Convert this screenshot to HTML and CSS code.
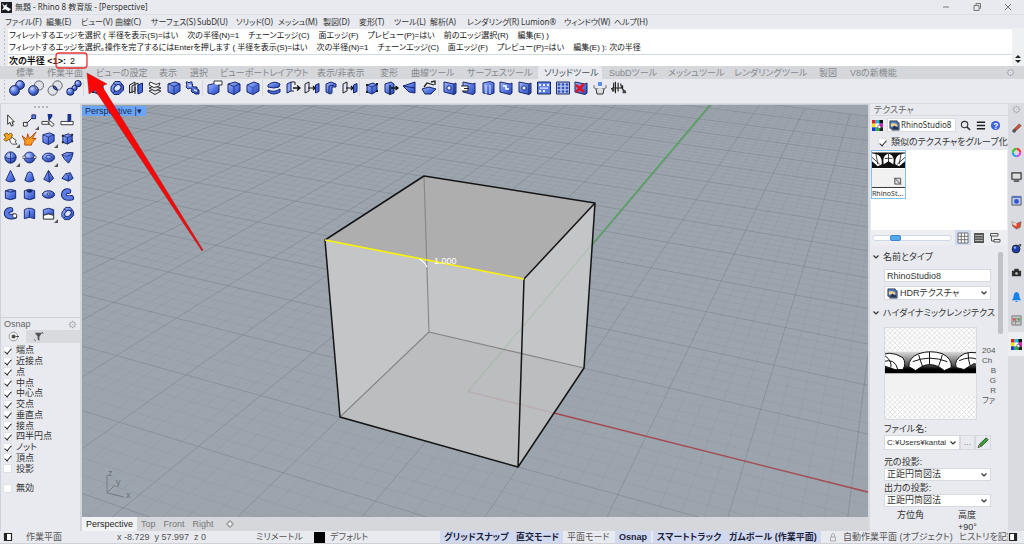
FILE: index.html
```html
<!DOCTYPE html>
<html lang="ja">
<head>
<meta charset="utf-8">
<title>無題 - Rhino 8 教育版 - [Perspective]</title>
<link rel="stylesheet" href="styles.css">
</head>
<body>
<svg class="sprite" aria-hidden="true">
  <defs>
    <linearGradient id="gb" x1="0" y1="0" x2="1" y2="1"><stop offset="0" stop-color="#a9bdfb"/><stop offset=".5" stop-color="#5a7be6"/><stop offset="1" stop-color="#2747b4"/></linearGradient>
    <radialGradient id="gs" cx=".35" cy=".3" r=".75"><stop offset="0" stop-color="#c9d6ff"/><stop offset=".5" stop-color="#5a7be6"/><stop offset="1" stop-color="#1d3799"/></radialGradient>
    <linearGradient id="band" x1="0" y1="0" x2="0" y2="1"><stop offset="0" stop-color="#ddd"/><stop offset=".6" stop-color="#555"/><stop offset=".8" stop-color="#000"/></linearGradient>
    <pattern id="checks" width="5" height="5" patternUnits="userSpaceOnUse"><path d="M0 0L5 5M5 0L0 5" stroke="#d3d3d3" stroke-width=".7"/></pattern>
  </defs>
  <symbol id="union" viewBox="0 0 16 16"><g fill="url(#gs)" stroke="#18255f"><circle cx="11" cy="5" r="4.4"/><circle cx="5.5" cy="10.5" r="4.9"/></g></symbol>
  <symbol id="diff" viewBox="0 0 16 16"><circle cx="11" cy="5.5" r="4.6" fill="#dfe2e8" stroke="#666"/><circle cx="5.5" cy="10.5" r="4.9" fill="url(#gs)" stroke="#18255f"/><path d="M6.5 5.6A4.6 4.6 0 0 0 10.4 10" fill="#ccd" stroke="#555"/></symbol>
  <symbol id="inter" viewBox="0 0 16 16"><g fill="#dfe2e8" stroke="#666"><circle cx="10.5" cy="5.5" r="4.7"/><circle cx="5.7" cy="10.5" r="4.7"/></g><path d="M6 6A4.8 4.8 0 0 1 10.2 10.2A4.8 4.8 0 0 1 6 6" fill="#456ae0" stroke="#18255f"/></symbol>
  <symbol id="split" viewBox="0 0 16 16"><g fill="url(#gs)" stroke="#18255f"><circle cx="12" cy="3.7" r="3.2"/><circle cx="8.5" cy="8" r="2.6"/><circle cx="4.3" cy="11.7" r="3.6"/></g></symbol>
  <symbol id="box" viewBox="0 0 16 16"><path d="M2 4L9 2L14 4V11L8 14.5L2 12Z" fill="url(#gb)" stroke="#17276c"/><path d="M2 4L8 6.500L14 4M8 6.500V14.500" fill="none" stroke="#17276c" stroke-width=".8"/></symbol>
  <symbol id="boxpt" viewBox="0 0 16 16"><path d="M3 5L9 3L13 5V11L8 14L3 12Z" fill="url(#gb)" stroke="#17276c"/><path d="M3 5L8 7L13 5M8 7V14" fill="none" stroke="#17276c" stroke-width=".8"/><g fill="#222"><path d="M2 4h2v2h-2zM12 3h2v2h-2zM2 11h2v2h-2zM12 10h2v2h-2z"/></g></symbol>
  <symbol id="boxnote" viewBox="0 0 16 16"><path d="M1 5L8 3.500L12 5V12L7 14.500L1 13Z" fill="url(#gb)" stroke="#17276c"/><path d="M7 4V1H15V5H11" fill="#fff" stroke="#333"/></symbol>
  <symbol id="chamfer" viewBox="0 0 16 16"><path d="M2 5L9 2L14 4V11L8 14.500L2 12Z" fill="url(#gb)" stroke="#17276c"/><path d="M2 5L8 8L14 4M8 8V14" fill="none" stroke="#2c49b0" stroke-width=".8"/></symbol>
  <symbol id="nut" viewBox="0 0 16 16"><path d="M2 7L6 1.500H11L14.500 6V10L10 14.500H5L2 11Z" fill="url(#gb)" stroke="#17276c"/><ellipse cx="8.500" cy="8" rx="3.800" ry="2.800" transform="rotate(-40 8.500 8)" fill="#dbe3ff" stroke="#17276c"/><path d="M4 3L7 5M13 4L11 6M4 13L6 11" stroke="#17276c"/></symbol>
  <symbol id="shell" viewBox="0 0 16 16"><path d="M1.500 13V5L7 2V11Z" fill="#d5dbe8" stroke="#222"/><path d="M4 13V6L10 3V12M7 14V7" fill="none" stroke="#222"/><path d="M10 14V5L14.500 3V12Z" fill="#456ae0" stroke="#17276c"/></symbol>
  <symbol id="layers" viewBox="0 0 16 16"><g fill="#e4e7ee" stroke="#333"><path d="M2 11L7 9L14 11L8 14.500Z"/><path d="M2 8L7 6L14 8L8 11Z"/><path d="M3 2L9 4.500L13 3L12 6L7 7.500L2 5Z" fill="#fff"/></g></symbol>
  <symbol id="puzzle" viewBox="0 0 16 16"><path d="M1 2H3L4 3L5 2H7V4L8 5L7 6L9 7H12V9L14 10V14H10L9 12L8 13L6 11L7 9L5 8L3 9L1 7L2 5Z" fill="url(#gb)" stroke="#17276c"/><path d="M4 5L6 6M9 10L12 11" stroke="#dde5ff" stroke-width="1.500"/></symbol>
  <symbol id="loft" viewBox="0 0 16 16"><path d="M2 5Q8 0 14 4L13 7Q8 9 2 7Z" fill="url(#gb)" stroke="#17276c"/><path d="M2 10Q8 13 14 9V12Q8 16 2 12Z" fill="#456ae0" stroke="#17276c"/></symbol>
  <symbol id="pull" viewBox="0 0 16 16"><path d="M2 13V4L6 2V11Z" fill="#8ca5f5" stroke="#17276c"/><path d="M6 2H10V5M6 11H9" fill="none" stroke="#222"/><path d="M8 8H14M12 5.500L15 8L12 10.500" fill="none" stroke="#111" stroke-width="1.400"/></symbol>
  <symbol id="pull2" viewBox="0 0 16 16"><path d="M1 13V4L5 2V11Z" fill="#dfe5f8" stroke="#222"/><path d="M4 8H11M9 6L11 8L9 10" fill="none" stroke="#111" stroke-width="1.200"/><path d="M11.500 13V5L15 3.500V11.500Z" fill="#456ae0" stroke="#17276c"/></symbol>
  <symbol id="ell" viewBox="0 0 16 16"><path d="M3 4L8 2L13 4V7H9V13L7 14L3 12Z" fill="url(#gb)" stroke="#17276c"/><path d="M6 6V13M6 6L11 5" stroke="#17276c"/></symbol>
  <symbol id="mvface" viewBox="0 0 16 16"><path d="M2 4L8 2L11 4V13L7 14.500L2 12Z" fill="url(#gb)" stroke="#17276c"/><path d="M7 5V14M8 8H15M12.500 6L15 8L12.500 10" fill="none" stroke="#111" stroke-width="1.300"/></symbol>
  <symbol id="wedge" viewBox="0 0 16 16"><path d="M1 6L13 2V13L7 12Z" fill="url(#gb)" stroke="#17276c"/><path d="M1 6L13 8" stroke="#17276c"/></symbol>
  <symbol id="rotface" viewBox="0 0 16 16"><path d="M1 9L8 7L15 9L10 14H4Z" fill="url(#gb)" stroke="#17276c"/><path d="M3 7L6 3L13 5M10 2L14 1V5" fill="none" stroke="#222" stroke-width="1.300"/></symbol>
  <symbol id="slab" viewBox="0 0 16 16"><path d="M2 2L12 4L14 3V13L12 14.500L2 12Z" fill="url(#gb)" stroke="#17276c"/><path d="M12 4V14" stroke="#17276c"/><circle cx="7" cy="8" r="2.200" fill="#e6ecff" stroke="#17276c"/></symbol>
  <symbol id="slab2" viewBox="0 0 16 16"><path d="M2 2L12 4L14 3V13L12 14.500L2 12Z" fill="url(#gb)" stroke="#17276c"/><path d="M0 6H7V11H1" fill="#fff" stroke="#222"/><path d="M3 8.500H8" stroke="#222"/></symbol>
  <symbol id="slab3" viewBox="0 0 16 16"><path d="M3 3L10 1.500L14 3V13L10 14.500L3 13Z" fill="url(#gb)" stroke="#17276c"/><path d="M6 5V14M10 5V14" stroke="#e6ecff"/></symbol>
  <symbol id="slab4" viewBox="0 0 16 16"><path d="M2 2L12 4L14 3V13L12 14.500L2 12Z" fill="url(#gb)" stroke="#17276c"/><path d="M5 6H8V9H11" fill="none" stroke="#fff" stroke-width="1.600"/></symbol>
  <symbol id="arr" viewBox="0 0 16 16"><path d="M1.500 2H14.500V14H1.500Z" fill="#5b7ce5" stroke="#17276c"/><g fill="#eef2ff"><circle cx="4" cy="5" r="1.200"/><circle cx="8" cy="5" r="1.200"/><circle cx="12" cy="5" r="1.200"/><circle cx="4" cy="11" r="1.200"/><circle cx="8" cy="11" r="1.200"/><path d="M4 7.500h8v1.200h-8z"/></g></symbol>
  <symbol id="arr2" viewBox="0 0 16 16"><path d="M1.500 2H14.500V14H1.500Z" fill="#aebbe8" stroke="#222f66"/><g fill="#3454bd"><circle cx="4" cy="4.500" r="1.300"/><circle cx="8" cy="4.500" r="1.300"/><circle cx="12" cy="4.500" r="1.300"/><circle cx="4" cy="8" r="1.300"/><circle cx="8" cy="8" r="1.300"/><circle cx="12" cy="8" r="1.300"/><circle cx="4" cy="11.500" r="1.300"/><circle cx="8" cy="11.500" r="1.300"/><circle cx="12" cy="11.500" r="1.300"/></g></symbol>
  <symbol id="del" viewBox="0 0 16 16"><path d="M2 2L12 4L14 3V13L12 14.500L2 12Z" fill="url(#gb)" stroke="#17276c"/><path d="M3 5L11 12M11 4L3 12" stroke="#e3131d" stroke-width="2.500"/></symbol>
  <symbol id="bucket" viewBox="0 0 16 16"><path d="M6 2h4v4h-4z" fill="#5b8cf0"/><path d="M2 5V8Q8 11 14 8V5" fill="none" stroke="#777"/><path d="M4 9L5 14H11L12 9" fill="#ddd" stroke="#333"/></symbol>
  <symbol id="fil" viewBox="0 0 18 16"><path d="M3 2V6Q3 9 0 9M5 1V14M8 2V12M3 8H12M11 3Q11 9 16 12M13 5V9" fill="none" stroke="#222" stroke-width="1.300"/><path d="M1 9h3v3h-3zM13 11h4v3h-4z" fill="#444"/></symbol>
  <symbol id="cursor" viewBox="0 0 16 16"><path d="M5 2V12L7.500 10L9 14L11 13L9.500 9.500H12Z" fill="#fff" stroke="#222"/></symbol>
  <symbol id="line" viewBox="0 0 16 16"><path d="M4 12L11 5" stroke="#222"/><path d="M1.500 10h4v4h-4z" fill="#fff" stroke="#222"/><path d="M10.500 2h4v4h-4z" fill="#5b7ce5" stroke="#17276c"/></symbol>
  <symbol id="trim" viewBox="0 0 16 16"><path d="M1 9H7L9 12H1ZM9 8L14 12L12 14.500L8 11Z" fill="#fff" stroke="#333"/><path d="M7 1H12V4L8 9Z" fill="#18358f"/></symbol>
  <symbol id="cut" viewBox="0 0 16 16"><path d="M1 9H14V12.500H1Z" fill="#fff" stroke="#333"/><path d="M8 1H12V8L8 10Z" fill="#18358f"/></symbol>
  <symbol id="jig" viewBox="0 0 16 16"><path d="M1 4L4 2L6 4L8 2L10 4L9 7L11 9L8 10L6 9L3 11L1 9L3 7Z" fill="#f4a51d" stroke="#7a4a00"/><path d="M7 9L10 7L14 10L13 12L15 14H10L8 12Z" fill="#fff" stroke="#444"/></symbol>
  <symbol id="boom" viewBox="0 0 16 16"><path d="M3 15L3 11L0 5L5 9L6 3L8 8L15 1L11 8L15 8L11 12L10 15Z" fill="#ff9d1e" stroke="#b8440a"/></symbol>
  <symbol id="ball" viewBox="0 0 16 16"><circle cx="8" cy="8" r="6" fill="url(#gs)" stroke="#17276c"/><path d="M2 8Q8 11 14 8M8 2V14" fill="none" stroke="#17276c" stroke-width=".8"/></symbol>
  <symbol id="ballpt" viewBox="0 0 16 16"><circle cx="8" cy="8" r="5.800" fill="url(#gs)" stroke="#17276c"/><path d="M2 8Q8 11 14 8" fill="none" stroke="#17276c" stroke-width=".8"/><path d="M1 6.500h2.500v2.500h-2.500zM12.500 6.500h2.500v2.500h-2.500z" fill="#fff" stroke="#222" stroke-width=".6"/></symbol>
  <symbol id="oval" viewBox="0 0 16 16"><ellipse cx="8" cy="8" rx="6.500" ry="4.700" fill="url(#gs)" stroke="#17276c"/><ellipse cx="8" cy="7.500" rx="3" ry="1.800" fill="#8fa8fa" stroke="#17276c" stroke-width=".8"/></symbol>
  <symbol id="parab" viewBox="0 0 16 16"><path d="M2 5Q7 1 14 3Q13 10 9 14Q4 10 2 5Z" fill="url(#gb)" stroke="#17276c"/><path d="M2 5Q8 9 14 3" fill="none" stroke="#17276c" stroke-width=".8"/></symbol>
  <symbol id="cone" viewBox="0 0 16 16"><path d="M8 1.500L13 12Q8 15.500 3 12Z" fill="url(#gb)" stroke="#17276c"/></symbol>
  <symbol id="tcone" viewBox="0 0 16 16"><path d="M6 4Q8 2 10.500 4L13 12Q8 15.500 3 12Z" fill="url(#gb)" stroke="#17276c"/></symbol>
  <symbol id="pyr" viewBox="0 0 16 16"><path d="M8 1.500L13.500 10L9 14L3 11Z" fill="url(#gb)" stroke="#17276c"/><path d="M8 2L9 14" stroke="#17276c"/></symbol>
  <symbol id="tpyr" viewBox="0 0 16 16"><path d="M6 5L11 4L14 10L9 13L2 10Z" fill="url(#gb)" stroke="#17276c"/><path d="M6 5L9 8L11 4M9 8V13" fill="none" stroke="#17276c" stroke-width=".7"/></symbol>
  <symbol id="cyl" viewBox="0 0 16 16"><path d="M2.500 4Q8 1 13.500 4V12Q8 15 2.500 12Z" fill="url(#gb)" stroke="#17276c"/><path d="M2.500 4Q8 7 13.500 4" fill="none" stroke="#17276c"/></symbol>
  <symbol id="tube" viewBox="0 0 16 16"><path d="M2.500 4Q8 1 13.500 4V12Q8 15 2.500 12Z" fill="url(#gb)" stroke="#17276c"/><ellipse cx="8" cy="4.500" rx="3" ry="1.500" fill="#17276c"/></symbol>
  <symbol id="torus" viewBox="0 0 16 16"><ellipse cx="8" cy="8" rx="6.500" ry="4" fill="url(#gs)" stroke="#17276c"/><ellipse cx="8" cy="7.500" rx="2" ry="1" fill="#fff" stroke="#17276c"/></symbol>
  <symbol id="pipe" viewBox="0 0 16 16"><g fill="none" stroke-linecap="round"><path d="M9 4.500Q4 4 4 8.500Q5 12.500 12 11.500" stroke="#17276c" stroke-width="6"/><path d="M9 4.500Q4 4 4 8.500Q5 12.500 12 11.500" stroke="#5b7ce5" stroke-width="4"/></g></symbol>
  <symbol id="pipe2" viewBox="0 0 16 16"><g fill="none" stroke-linecap="round"><path d="M8 4Q3 4.500 4 9Q6 12.500 12 11" stroke="#17276c" stroke-width="6"/><path d="M8 4Q3 4.500 4 9Q6 12.500 12 11" stroke="#5b7ce5" stroke-width="4"/></g><circle cx="12.500" cy="10.500" r="2.300" fill="#fff" stroke="#333"/></symbol>
  <symbol id="extr" viewBox="0 0 16 16"><path d="M2.500 4L6 2.500H10L13.500 4V13.500L8 12L2.500 13.500Z" fill="url(#gb)" stroke="#17276c"/><path d="M8 5V12" stroke="#17276c"/></symbol>
  <symbol id="extr2" viewBox="0 0 16 16"><path d="M2.500 4Q8 1 13.500 4V10Q8 7 2.500 10Z" fill="url(#gb)" stroke="#17276c"/><path d="M2.500 10Q8 7 13.500 10V14H2.500Z" fill="#fff" stroke="#222"/></symbol>
  <symbol id="gear" viewBox="0 0 12 12"><path d="M6 1V11M1 6H11M2.500 2.500L9.500 9.500M9.500 2.500L2.500 9.500" stroke="#aaadb5" stroke-width="1.800"/><circle cx="6" cy="6" r="3.300" fill="#e8eaef" stroke="#aaadb5"/><circle cx="6" cy="6" r="1" fill="#b9bcc3"/></symbol>
  <symbol id="mat" viewBox="0 0 12 12"><path d="M0 0H4V4H0Z" fill="#e02020"/><path d="M4 0H8V4H4Z" fill="#18c0e0"/><path d="M8 0H12V4H8Z" fill="#111"/><path d="M0 4H4V8H0Z" fill="#f3e216"/><path d="M4 4H8V8H4Z" fill="#fff"/><path d="M8 4H12V8H8Z" fill="#d21fc8"/><path d="M0 8H4V12H0Z" fill="#1c36d8"/><path d="M4 8H8V12H4Z" fill="#20b840"/><path d="M8 8H12V12H8Z" fill="#222"/><circle cx="8" cy="7.500" r="1.800" fill="#fff" stroke="#222" stroke-width=".6"/></symbol>
  <symbol id="pic" viewBox="0 0 12 12"><path d="M1 1H9V3H11V11H3V9H1Z" fill="#4d7fc7" stroke="#37404f"/><path d="M2 4Q5 2 9 5V7H2Z" fill="#f0cf8f"/><path d="M4 8L6 6L8 8L9 7L10 9V10H4Z" fill="#24324d"/></symbol>
  <symbol id="chev" viewBox="0 0 8 8"><path d="M1.500 2.500L4 5L6.500 2.500" fill="none" stroke="#333" stroke-width="1.200"/></symbol>
  <symbol id="hdr" viewBox="0 0 92 92"><path d="M0 0H92V92H0Z" fill="#fff"/><path d="M0 0H92V92H0Z" fill="url(#checks)"/><path d="M0 24H92V46H0Z" fill="url(#band)"/><path d="M0 46H92V69H0Z" fill="#f2f2f2"/><g fill="#fff" stroke="#111" stroke-width="1"><path d="M-8 30Q4 21 18 30Q22 36 18 42L10 42L-2 38Z"/><path d="M24 39Q24 30 34 26Q46 22 58 26Q68 31 67 40L60 43L54 39Q45 35 37 39L31 43Z"/><path d="M72 40Q69 32 80 26Q92 22 104 30V40L90 36L80 42Z"/></g><path d="M-2 34Q10 30 13 42M0 28Q7 33 6 40M45 24V37M28 34Q45 27 63 34M34 27Q36 34 38 39M58 27Q56 34 54 39M75 33Q86 28 94 32M84 25Q84 32 86 38" fill="none" stroke="#111" stroke-width="1"/></symbol>
</svg>

<header class="titlebar">
  <svg class="logo" viewBox="0 0 12 12"><rect width="12" height="12" fill="#1b1d22"/><path d="M1 1L4 4L7 2L6 5L11 8L8 10L5 8L1 9L3 6Z" fill="#fff"/></svg>
  <h1>無題 - Rhino 8 教育版 - [Perspective]</h1>
  <div class="winbtns">
    <button aria-label="最小化"><svg viewBox="0 0 10 10"><path d="M2 5H8" stroke="#777"/></svg></button>
    <button aria-label="元に戻す"><svg viewBox="0 0 10 10"><path d="M2 3.500H7V8.500H2ZM4 3V1.500H8.500V6.500H7.500" fill="none" stroke="#777"/></svg></button>
    <button aria-label="閉じる"><svg viewBox="0 0 10 10"><path d="M2 2L8 8M8 2L2 8" stroke="#777"/></svg></button>
  </div>
</header>

<nav class="menubar">
  <button>ファイル(F)</button><button>編集(E)</button><button>ビュー(V)</button><button>曲線(C)</button><button>サーフェス(S)</button><button>SubD(U)</button><button>ソリッド(O)</button><button>メッシュ(M)</button><button>製図(D)</button><button>変形(T)</button><button>ツール(L)</button><button>解析(A)</button><button>レンダリング(R)</button><button>Lumion®</button><button>ウィンドウ(W)</button><button>ヘルプ(H)</button>
</nav>

<section class="command">
  <div class="grip"></div>
  <div class="console">
    <div class="history">
      <p><span>フィレットするエッジを選択 ( 半径を表示(S)=はい</span><span>次の半径(N)=1</span><span>チェーンエッジ(C)</span><span>面エッジ(F)</span><span>プレビュー(P)=はい</span><span>前のエッジ選択(R)</span><span>編集(E) )</span></p>
      <p><span>フィレットするエッジを選択。操作を完了するにはEnterを押します ( 半径を表示(S)=はい</span><span>次の半径(N)=1</span><span>チェーンエッジ(C)</span><span>面エッジ(F)</span><span>プレビュー(P)=はい</span><span>編集(E) ): 次の半径</span></p>
    </div>
    <div class="prompt"><label for="cmd">次の半径 &lt;1&gt;:</label><input id="cmd" value="2"></div>
  </div>
  <div class="spin"><svg viewBox="0 0 8 10"><path d="M1 4L4 1L7 4ZM1 6L4 9L7 6Z" fill="#222"/></svg></div>
</section>

<nav class="tabs">
  <button>標準</button><button>作業平面</button><button>ビューの設定</button><button>表示</button><button>選択</button><button>ビューポートレイアウト</button><button>表示/非表示</button><button>変形</button><button>曲線ツール</button><button>サーフェスツール</button><button class="on">ソリッドツール</button><button>SubDツール</button><button>メッシュツール</button><button>レンダリングツール</button><button>製図</button><button>V8の新機能</button>
  <svg class="gear"><use href="#gear"/></svg>
</nav>

<div class="toolbar">
  <div class="grip"></div>
  <div class="tools g4"><button aria-label="和"><svg><use href="#union"/></svg></button><button aria-label="差"><svg><use href="#diff"/></svg></button><button aria-label="積"><svg><use href="#inter"/></svg></button><button aria-label="分割"><svg><use href="#split"/></svg></button></div>
  <div class="tools g6"><button aria-label="エッジ"><svg><use href="#boxpt"/></svg></button><button aria-label="ナット"><svg><use href="#nut"/></svg></button><button aria-label="シェル"><svg><use href="#shell"/></svg></button><button aria-label="抽出"><svg><use href="#layers"/></svg></button><button aria-label="キャップ"><svg><use href="#box"/></svg></button><button aria-label="マージ"><svg><use href="#puzzle"/></svg></button></div>
  <div class="tools g3"><button aria-label="注記"><svg><use href="#boxnote"/></svg></button><button aria-label="フィレット"><svg><use href="#box"/></svg></button><button aria-label="面取り"><svg><use href="#chamfer"/></svg></button></div>
  <div class="tools g5"><button aria-label="ブレンド"><svg><use href="#loft"/></svg></button><button aria-label="押し出し"><svg><use href="#pull"/></svg></button><button aria-label="境界"><svg><use href="#pull2"/></svg></button><button aria-label="折り"><svg><use href="#ell"/></svg></button><button aria-label="移動"><svg><use href="#pull2"/></svg></button></div>
  <div class="tools g4b"><button aria-label="制御点"><svg><use href="#boxpt"/></svg></button><button aria-label="面移動"><svg><use href="#mvface"/></svg></button><button aria-label="テーパ"><svg><use href="#wedge"/></svg></button><button aria-label="面回転"><svg><use href="#rotface"/></svg></button></div>
  <div class="tools g10"><button aria-label="丸穴"><svg><use href="#slab"/></svg></button><button aria-label="穴配置"><svg><use href="#slab2"/></svg></button><button aria-label="回転穴"><svg><use href="#slab3"/></svg></button><button aria-label="穴移動"><svg><use href="#slab4"/></svg></button><button aria-label="穴複製"><svg><use href="#slab"/></svg></button><button aria-label="環状穴"><svg><use href="#arr"/></svg></button><button aria-label="穴配列"><svg><use href="#arr2"/></svg></button><button aria-label="穴削除"><svg><use href="#del"/></svg></button><button aria-label="ゴミ箱"><svg><use href="#bucket"/></svg></button><button aria-label="履歴"><svg><use href="#fil"/></svg></button></div>
</div>

<main class="work">
  <aside class="left">
    <div class="dots"></div>
    <div class="palette">
      <button aria-label="選択"><svg><use href="#cursor"/></svg></button><button class="fly" aria-label="線"><svg><use href="#line"/></svg></button><button aria-label="トリム"><svg><use href="#trim"/></svg></button><button aria-label="分割"><svg><use href="#cut"/></svg></button>
      <button class="fly" aria-label="結合"><svg><use href="#jig"/></svg></button><button aria-label="分解"><svg><use href="#boom"/></svg></button><button class="fly" aria-label="直方体"><svg><use href="#box"/></svg></button><button aria-label="直方体 3点"><svg><use href="#boxpt"/></svg></button>
      <button class="fly" aria-label="球"><svg><use href="#ball"/></svg></button><button aria-label="球 直径"><svg><use href="#ballpt"/></svg></button><button class="fly" aria-label="楕円体"><svg><use href="#oval"/></svg></button><button aria-label="放物面"><svg><use href="#parab"/></svg></button>
      <button aria-label="円錐"><svg><use href="#cone"/></svg></button><button aria-label="円錐台"><svg><use href="#tcone"/></svg></button><button aria-label="角錐"><svg><use href="#pyr"/></svg></button><button aria-label="角錐台"><svg><use href="#tpyr"/></svg></button>
      <button aria-label="円柱"><svg><use href="#cyl"/></svg></button><button aria-label="円筒"><svg><use href="#tube"/></svg></button><button aria-label="トーラス"><svg><use href="#torus"/></svg></button><button aria-label="パイプ"><svg><use href="#pipe"/></svg></button>
      <button aria-label="パイプ 丸"><svg><use href="#pipe2"/></svg></button><button aria-label="押し出し"><svg><use href="#extr"/></svg></button><button class="fly" aria-label="面押し出し"><svg><use href="#extr2"/></svg></button><button aria-label="ソリッド編集"><svg><use href="#nut"/></svg></button>
    </div>
    <section class="osnap">
      <div class="ptitle"><h2>Osnap</h2><svg class="gear"><use href="#gear"/></svg></div>
      <div class="otabs"><button class="on" aria-label="Osnap"><svg viewBox="0 0 12 12"><circle cx="6" cy="6" r="4.700" fill="#fff" stroke="#888"/><path d="M4.500 4.500h3v3h-3zM8 6H12" fill="#444" stroke="#444"/></svg></button><button aria-label="フィルタ"><svg viewBox="0 0 12 12"><path d="M2 2H10L7 6V11L5 9V6Z" fill="#555"/><path d="M1 9L3 11M10 1L11 3" stroke="#555"/></svg></button></div>
      <div class="checks">
        <label><input type="checkbox" checked>端点</label><label><input type="checkbox" checked>近接点</label><label><input type="checkbox" checked>点</label><label><input type="checkbox" checked>中点</label><label><input type="checkbox" checked>中心点</label><label><input type="checkbox" checked>交点</label><label><input type="checkbox" checked>垂直点</label><label><input type="checkbox" checked>接点</label><label><input type="checkbox" checked>四半円点</label><label><input type="checkbox" checked>ノット</label><label><input type="checkbox" checked>頂点</label><label><input type="checkbox">投影</label>
      </div>
      <label class="off"><input type="checkbox">無効</label>
    </section>
  </aside>

  <section class="center">
    <div class="viewport">
      <svg class="scene" viewBox="82 105 786 412" preserveAspectRatio="xMidYMid slice">
        <path id="minor" class="minor"/><path id="major" class="major"/>
        <path class="xaxis" d="M468 391.500L556 413.500L868 492"/><path class="yaxis" d="M468 391.500L710 105"/>
        <path fill="#c6c7c8" fill-opacity=".95" d="M325 240L424 176L595 203L584 368L518 467L340 417Z"/>
        <path fill="#b9babb" fill-opacity=".8" d="M429 332L584 368L518 467L340 417Z"/>
        <path fill="#aeaeae" d="M325 240L424 176L595 203L524 279Z"/>
        <path class="hid" d="M424 176L429 332L340 417M429 332L584 368"/>
        <path class="xaxis faint" d="M468 391.500L556 413.500"/><path class="yaxis faint" d="M468 391.500L594 242"/>
        <path class="edge" d="M325 240L424 176L595 203L584 368L518 467L340 417ZM595 203L524 279L518 467"/>
        <path class="pick" d="M325 240L524 279"/>
        <path d="M419 259Q424 261 427 267" fill="none" stroke="#fff" stroke-width="1.300"/>
        <text x="434" y="264" class="dim">1.000</text>
        <path class="triad" d="M107 475V493L124 497M107 493L115 485"/>
        <g class="axis"><text x="108" y="476">z</text><text x="116" y="485">y</text><text x="126" y="498">x</text></g>
      </svg>
      <button class="vlabel">Perspective <span>|▾</span></button>
    </div>
    <nav class="vtabs"><button class="on">Perspective</button><button>Top</button><button>Front</button><button>Right</button><button aria-label="追加"><svg viewBox="0 0 8 8"><path d="M3 1h2v2h2v2h-2v2h-2v-2h-2v-2h2z" fill="#fff" stroke="#777" stroke-width=".8"/></svg></button></nav>
  </section>

  <aside class="right">
    <div class="panel">
      <div class="ptitle"><h2>テクスチャ</h2></div>
      <div class="search"><svg class="i10"><use href="#mat"/></svg><div class="field"><svg class="i10"><use href="#pic"/></svg><input aria-label="テクスチャ名" value="RhinoStudio8"></div>
        <button aria-label="検索"><svg viewBox="0 0 12 12"><circle cx="5" cy="5" r="3.500" fill="none" stroke="#333" stroke-width="1.200"/><path d="M7.500 7.500L11 11" stroke="#333" stroke-width="1.600"/></svg></button>
        <button aria-label="メニュー"><svg viewBox="0 0 12 12"><path d="M2 2.500H11M2 6H11M2 9.500H11" stroke="#222" stroke-width="1.600"/></svg></button>
        <button aria-label="ヘルプ"><svg viewBox="0 0 12 12"><circle cx="6" cy="6" r="5" fill="#3d62dc"/><text x="3.500" y="9.500" class="q">?</text></svg></button></div>
      <label class="group"><input type="checkbox" checked>類似のテクスチャをグループ化</label>
      <div class="thumbs">
        <button class="thumb"><svg viewBox="0 0 34 37"><path d="M0 0H34V16H0Z" fill="#111"/><g fill="#fff"><path d="M0 1Q11 1 10 12L6 14L0 9ZM12 12Q10 3 17 1Q24 3 22 12L17 9ZM34 1Q23 1 24 12L28 14L34 9Z"/></g><path d="M0 5L8 12M4 1L6 12M17 1V12M13 6H21M34 5L26 12M30 1L28 12" stroke="#111" stroke-width=".8"/><path d="M0 17H34V36H0Z" fill="#f1f1f1"/><path d="M0 36H34" stroke="#333"/><path d="M23.500 26.500H29.500V32.500H23.500ZM23 26L30 33" fill="#ddd" stroke="#555"/></svg><span>RhinoSt...</span></button>
        <div class="sizer"><input type="range" aria-label="サイズ" min="0" max="100" value="25">
          <button class="on" aria-label="グリッド"><svg viewBox="0 0 12 12"><path d="M1 1H11V11H1ZM1 4.300H11M1 7.700H11M4.300 1V11M7.700 1V11" fill="#fff" stroke="#555" stroke-width=".8"/></svg></button><button aria-label="リスト"><svg viewBox="0 0 12 12"><path d="M1 1H11V11H1Z" fill="#555"/><path d="M2 3.500H10M2 6H10M2 8.500H10" stroke="#ccc" stroke-width=".8"/></svg></button><button aria-label="ツリー"><svg viewBox="0 0 12 12"><path d="M1.500 1.500H9V4H1.500ZM5 7.500H11V10H5ZM2.500 4V9H5" fill="none" stroke="#555"/></svg></button></div>
      </div>
      <div class="props">
        <h3><svg class="cv"><use href="#chev"/></svg>名前とタイプ</h3>
        <div class="body">
          <input class="text" aria-label="名前" value="RhinoStudio8">
          <div class="sel icon"><svg class="i10"><use href="#pic"/></svg><select aria-label="タイプ"><option>HDRテクスチャ</option></select><svg class="cv"><use href="#chev"/></svg></div>
        </div>
        <h3 class="second"><svg class="cv"><use href="#chev"/></svg>ハイダイナミックレンジテクス</h3>
        <div class="body">
          <div class="preview"><svg class="hdr"><use href="#hdr"/></svg><ul><li>204</li><li>Ch</li><li class="in">B</li><li class="in">G</li><li class="in">R</li><li>ファ</li></ul></div>
          <label for="file">ファイル名:</label>
          <div class="filerow"><div class="sel"><select id="file"><option>C:¥Users¥kantai</option></select><svg class="cv"><use href="#chev"/></svg></div><button>...</button><button aria-label="編集"><svg viewBox="0 0 14 14"><path d="M2 12L3.500 8.500L10.500 2L12.500 4L5.500 11Z" fill="#3aa53a" stroke="#215c21"/><path d="M1.500 12.500L3.500 9L5 11Z" fill="#e8c9a0" stroke="#333" stroke-width=".6"/></svg></button></div>
          <label for="src">元の投影:</label>
          <div class="sel"><select id="src"><option>正距円筒図法</option></select><svg class="cv"><use href="#chev"/></svg></div>
          <label for="out">出力の投影:</label>
          <div class="sel"><select id="out"><option>正距円筒図法</option></select><svg class="cv"><use href="#chev"/></svg></div>
          <div class="angles"><span>方位角</span><span>高度</span></div>
          <div class="deg">+90°</div>
        </div>
        <div class="scroll"></div>
      </div>
    </div>
    <nav class="strip">
      <svg class="gear"><use href="#gear"/></svg>
      <button aria-label="プロパティ"><svg viewBox="0 0 12 12"><path d="M2 9L4 6L9 1L11 3L6 8Z" fill="#d94b2b" stroke="#444" stroke-width=".7"/><circle cx="3.500" cy="8.500" r="2" fill="#555"/></svg></button>
      <button aria-label="レイヤ"><svg viewBox="0 0 12 12"><g fill="none" stroke-width="2.400"><path d="M6 2A4 4 0 0 1 10 6" stroke="#f33"/><path d="M10 6A4 4 0 0 1 6 10" stroke="#e83ee0"/><path d="M6 10A4 4 0 0 1 2 6" stroke="#18a8e8"/><path d="M2 6A4 4 0 0 1 6 2" stroke="#3c3"/></g></svg></button>
      <button aria-label="表示"><svg viewBox="0 0 12 12"><path d="M1 2H11V9H1Z" fill="#ddd" stroke="#333" stroke-width="1.300"/><path d="M3 11H9" stroke="#333" stroke-width="1.500"/></svg></button>
      <button aria-label="ビュー"><svg viewBox="0 0 12 12"><path d="M1 2H11V11H1Z" fill="#b9c9ef" stroke="#555"/><path d="M1 1h10v2h-10z" fill="#5070b8"/><circle cx="6" cy="7" r="2.600" fill="#2f56d2"/></svg></button>
      <button aria-label="マテリアル"><svg viewBox="0 0 12 12"><path d="M1 3L6 5L11 3L10 9L6 11L2 8Z" fill="#e2482e" stroke="#555" stroke-width=".6"/><path d="M1 3L6 5L6 8L2 6Z" fill="#f7dcc8"/></svg></button>
      <button aria-label="環境"><svg viewBox="0 0 12 12"><circle cx="5.500" cy="6.500" r="4.300" fill="#1d3fb4" stroke="#222"/><circle cx="4.300" cy="5" r="1.300" fill="#9ab2ff"/><path d="M8 2L11 1V4Z" fill="#333"/></svg></button>
      <button aria-label="カメラ"><svg viewBox="0 0 12 12"><path d="M1 4H3L4 2H8L9 4H11V10H1Z" fill="#333"/><circle cx="6" cy="7" r="2.200" fill="#aaa" stroke="#111"/></svg></button>
      <button aria-label="通知"><svg viewBox="0 0 12 12"><path d="M1 10Q3 8 3 5Q3 1.500 6 1Q9 1.500 9 5Q9 8 11 10ZM5 11h2v1h-2z" fill="#1583ec"/></svg></button>
      <button aria-label="計算機"><svg viewBox="0 0 12 12"><path d="M1 1H11V11H1Z" fill="#c5c8c6" stroke="#777"/><path d="M2 4H10M2 7H10M5 4V11" stroke="#888"/><path d="M2 4h3v2h-3z" fill="#d55"/><path d="M7 4h3v2h-3z" fill="#5a5"/></svg></button>
      <button class="on" aria-label="テクスチャ"><svg><use href="#mat"/></svg></button>
    </nav>
  </aside>
</main>

<footer class="status">
  <button aria-label="左パネル"><svg viewBox="0 0 10 10"><path d="M1.500 1.500H8.500V8.500H1.500Z" fill="#fff" stroke="#222" stroke-width="1.200"/><path d="M1 1h3v8h-3z" fill="#222"/></svg></button>
  <button>作業平面</button><span>x -8.729&nbsp; y 57.997&nbsp; z 0</span><button>ミリメートル</button>
  <button class="layer"><i></i>デフォルト</button>
  <button class="on">グリッドスナップ</button><button class="on">直交モード</button><button>平面モード</button><button class="on">Osnap</button><button class="on">スマートトラック</button><button class="on">ガムボール (作業平面)</button>
  <svg class="lock" viewBox="0 0 10 10"><path d="M2.500 5H7.500V9H2.500ZM3.500 5V2.500Q5 .5 6.500 2.500V5" fill="none" stroke="#aaa"/></svg>
  <button>自動作業平面 (オブジェクト)</button><button>ヒストリを記録</button>
  <button aria-label="右パネル"><svg viewBox="0 0 10 10"><path d="M1.500 1.500H8.500V8.500H1.500Z" fill="#fff" stroke="#222" stroke-width="1.200"/><path d="M6 1h3v8h-3z" fill="#222"/></svg></button>
</footer>

<svg class="callout" viewBox="0 0 210 260" aria-hidden="true"><rect x="56" y="53" width="31" height="15" rx="3" fill="none" stroke="#e33" stroke-width="1.300"/><path d="M87 73L107 84L102 86L203 250L202 251L95 90L89 94Z" fill="#fb0505" stroke="#8b1a1a" stroke-width=".4"/></svg>
<script src="grid.js"></script>
</body>
</html>
```
FILE: styles.css
```css
* { box-sizing: border-box; }
body { margin: 0; height: 100vh; display: flex; flex-direction: column; overflow: hidden; background: #e8eaef; color: #333; font: 9px/12px "Liberation Sans", "Noto Sans CJK JP", sans-serif; font-feature-settings: "palt"; position: relative; }
button, input, select { font: inherit; font-feature-settings: inherit; color: inherit; border: 0; padding: 0; margin: 0; background: none; }
button { display: block; white-space: nowrap; text-align: left; }
svg { display: block; }
h1, h2, h3, p, ul { margin: 0; padding: 0; font-weight: normal; font-size: inherit; list-style: none; }
.sprite { position: absolute; width: 0; height: 0; }

.titlebar { display: flex; align-items: center; height: 15px; padding-left: 1px; border-bottom: 1px solid #dcdfe5; flex: none; }
.logo { width: 11px; height: 11px; margin-right: 3px; }
.titlebar h1 { flex: 1; font-size: 8px; font-family: "Noto Sans", "Noto Sans CJK JP", sans-serif; }
.winbtns { display: flex; gap: 21px; padding-right: 11px; }
.winbtns svg { width: 10px; height: 10px; }

.menubar { display: grid; grid-template-columns: 41px 35px 34px 36px 46px 39px 42px 45px 36px 35px 36px 37px 54px 43px 50px 40px; height: 13px; padding-left: 5px; flex: none; font-size: 8px; font-family: "Noto Sans", "Noto Sans CJK JP", sans-serif; }
.command { display: flex; height: 38px; flex: none; color: #111; }
.grip { width: 8px; flex: none; background: radial-gradient(circle, #bbbec6 1px, transparent 1px) 3px 6px / 3px 4px repeat-y; }
.console { flex: 1; margin-top: 1px; background: #fff; }
.history { height: 26px; display: flex; flex-direction: column; justify-content: flex-end; border-bottom: 1px solid #cfdbe6; padding-left: 1px; font-size: 8px; }
.history p { display: flex; gap: 9px; flex: none; white-space: nowrap; line-height: 12px; }
.prompt { display: flex; align-items: center; height: 11px; gap: 4px; padding-left: 1px; }
.prompt label { font-weight: bold; white-space: nowrap; }
.prompt input { width: 60px; outline: 0; }
.spin { width: 12px; padding: 26px 2px 0; background: #eff0f2; }
.spin svg { width: 8px; height: 10px; }

.tabs { display: grid; grid-template-columns: 31px 49px 63px 31px 30px 97px 63px 31px 56px 77px 65px 59px 66px 85px 31px 1fr 18px; height: 13px; padding-left: 16px; background: #d5d7db; color: #85878c; flex: none; align-items: center; }
.tabs .on { background: #e8eaef; color: #45505a; height: 13px; margin-left: -6px; padding-left: 6px; width: 64px; border-radius: 3px 3px 0 0; }
.gear { width: 9px; height: 9px; }
.toolbar { display: flex; height: 25px; flex: none; align-items: flex-start; padding-top: 1px; border-bottom: 1px solid #d6d8de; }
.toolbar .grip { height: 20px; }
.tools { display: grid; grid-auto-flow: column; grid-auto-columns: 1fr; justify-items: center; }
.tools svg { width: 16px; height: 16px; }
.g4 { width: 76px; border-right: 1px solid #d5d7dd; }
.g6 { width: 115px; margin-left: 4px; border-right: 1px solid #d5d7dd; }
.g3 { width: 58px; margin-left: 2px; border-right: 1px solid #d5d7dd; }
.g5 { width: 95px; margin-left: 2px; border-right: 1px solid #d5d7dd; }
.g4b { width: 77px; margin-left: 2px; border-right: 1px solid #d5d7dd; }
.g10 { width: 187px; margin-left: 2px; }

.work { flex: 1; min-height: 0; display: flex; }
.left { width: 82px; flex: none; border-left: 1px solid #ccd3dd; border-right: 2px solid #d2d5db; display: flex; flex-direction: column; }
.dots { height: 4px; margin: 1px 32px 2px; background: radial-gradient(circle, #b4b7be 1px, transparent 1px) 0 0 / 4px 4px; }
.palette { display: grid; grid-template: repeat(6, 1fr) / repeat(4, 19px); height: 112px; }
.palette button { display: grid; place-items: center; position: relative; }
.palette svg { width: 15px; height: 15px; }
.fly::after { content: ""; position: absolute; right: 0; bottom: 0; border: 2px solid; border-color: transparent #555 #555 transparent; }
.osnap { margin-top: auto; height: 214px; border-top: 1px solid #cfd2d9; }
.ptitle { display: flex; align-items: center; justify-content: space-between; height: 12px; padding: 0 3px; color: #666; }
.otabs { display: flex; background: #d8dade; height: 13px; }
.otabs button { width: 25px; display: grid; place-items: center; }
.otabs .on { background: #e8eaef; }
.otabs svg { width: 11px; height: 11px; }
.checks { display: grid; grid-auto-rows: 1fr; height: 129px; margin-top: 2px; line-height: 10px; }
.checks label, .off, .group { display: flex; align-items: center; gap: 4px; padding-left: 2px; white-space: nowrap; }
.off { margin-top: 8px; }
input[type=checkbox] { appearance: none; width: 9px; height: 9px; background: #fff; border: 1px solid #dfe1e5; display: grid; place-items: center; }
input[type=checkbox]:checked::before { content: ""; width: 3px; height: 6px; border: solid #222; border-width: 0 1px 1px 0; transform: rotate(40deg); }

.center { flex: 1; min-width: 0; display: flex; flex-direction: column; }
.viewport { flex: 1; min-height: 0; position: relative; background: #9ca4ad; border-top: 1px solid #c8ccd3; }
.scene { width: 100%; height: 100%; }
.minor, .major { fill: none; stroke: #6f7780; }
.minor { stroke-opacity: .16; stroke-width: .7; }
.major { stroke-opacity: .45; stroke-width: .9; }
.xaxis { fill: none; stroke: #a94a52; stroke-width: 1.3; }
.yaxis { fill: none; stroke: #4ca353; stroke-width: 1.3; }
.faint { opacity: .12; }
.hid { fill: none; stroke: #858585; stroke-width: 1.1; }
.edge { fill: none; stroke: #141414; stroke-width: 1.5; stroke-linejoin: round; }
.pick { stroke: #fbf304; stroke-width: 1.6; }
.dim { fill: #fff; font-size: 9px; }
.triad { fill: none; stroke: #747a82; }
.axis { fill: #6a7078; font-size: 9px; }
.vlabel { position: absolute; left: 0; top: 1px; height: 10px; width: 64px; padding-left: 3px; background: #69a5fb; color: #1b2c4c; font-size: 9px; line-height: 10px; }
.vtabs { display: flex; height: 14px; background: #d5d7db; color: #777; line-height: 13px; }
.vtabs .on { background: #f2f3f5; color: #222; }
.vtabs button { padding: 0 4px; }
.vtabs svg { width: 8px; height: 8px; margin-left: 4px; }

.right { width: 156px; flex: none; display: flex; border-left: 2px solid #d8dade; }
.panel { flex: 1; min-width: 0; display: flex; flex-direction: column; padding-left: 1px; }
.panel .ptitle { border-bottom: 1px solid #d8dadf; }
.search { display: flex; align-items: center; height: 18px; gap: 4px; padding: 0 3px 0 1px; }
.i10 { width: 11px; height: 11px; flex: none; }
.field { display: flex; align-items: center; width: 69px; height: 14px; gap: 1px; background: #fff; border: 1px solid #d9dbe0; padding-left: 1px; font-size: 8px; font-family: "Noto Sans", sans-serif; }
.field input { width: 54px; }
.search button svg { width: 11px; height: 11px; }
.q { fill: #fff; font-size: 9px; font-weight: bold; }
.group { height: 16px; padding-left: 7px; }
.thumbs { height: 95px; background: #fff; display: flex; flex-direction: column; justify-content: space-between; margin-right: 1px; }
.thumb { width: 35px; border: 1px solid #85c1ee; height: 49px; font-size: 7px; line-height: 9px; font-family: "Noto Sans", sans-serif; }
.thumb svg { width: 33px; height: 37px; }
.sizer { display: flex; align-items: center; background: #eceef2; padding-left: 1px; }
.sizer input { appearance: none; width: 80px; height: 6px; background: #fff; border: 1px solid #cdd7e6; border-radius: 3px; margin-right: 3px; }
.sizer input::-webkit-slider-thumb { appearance: none; width: 11px; height: 6px; background: #55a7ee; border: 1px solid #3a87cd; border-radius: 2px; }
.sizer button { width: 16px; height: 15px; display: grid; place-items: center; }
.sizer .on { background: #cfdaf0; }
.sizer svg { width: 12px; height: 12px; }
.props { flex: 1; min-height: 0; overflow: hidden; position: relative; padding-top: 5px; }
.props h3 { display: flex; align-items: center; height: 14px; gap: 3px; white-space: nowrap; width: 126px; padding-left: 1px; }
.cv { width: 8px; height: 8px; flex: none; }
.second { margin-top: 6px; }
.body { width: 124px; padding: 5px 4px 0 13px; }
.second + .body { padding-top: 7px; }
.text { width: 100%; height: 13px; background: #fff; border: 1px solid #d5d9e0; padding-left: 2px; display: block; }
.sel { display: flex; align-items: center; height: 13px; background: #fff; border: 1px solid #d5d9e0; padding: 0 2px; }
.sel select { appearance: none; flex: 1; min-width: 0; width: 100%; height: 11px; line-height: 11px; outline: 0; }
.icon { margin-top: 4px; gap: 2px; height: 14px; }
.preview { display: flex; gap: 5px; margin: 0 -5px 3px 0; }
.hdr { width: 93px; height: 93px; flex: none; border: 1px solid #d8dade; }
.preview ul { padding-top: 19px; line-height: 10px; font-size: 8px; width: 14px; white-space: nowrap; color: #555; }
.in { text-align: right; }
.body label { display: block; line-height: 12px; margin-top: 1px; }
.filerow { display: grid; grid-template-columns: 76px 15px 16px; height: 15px; margin-bottom: 6px; }
.filerow .sel { height: 15px; font-size: 8px; }
.filerow button { border: 1px solid #d5d9e0; text-align: center; color: #888; line-height: 11px; }
.filerow button svg { width: 14px; height: 13px; }
.angles { display: flex; gap: 34px; padding: 2px 13px 0; white-space: nowrap; }
.deg { padding-left: 74px; line-height: 12px; }
.scroll { position: absolute; right: 5px; top: 7px; width: 5px; height: 82px; background: #bfc2c7; border-radius: 2px; }
.strip { width: 16px; flex: none; background: #d9dbe0; display: flex; flex-direction: column; align-items: center; }
.strip .gear { margin: 1px 0 2px; }
.strip button { width: 100%; height: 24px; display: grid; place-items: center; }
.strip .on { background: #eceef2; }
.strip button svg { width: 11px; height: 11px; }

.status { display: grid; grid-template-columns: 23px 91px 139px 58px 126px 72px 55px 48px 38px 72px 103px 15px 116px 49px 1fr; height: 13px; padding-left: 3px; flex: none; border-bottom: 1px solid #cfd1d6; align-items: center; line-height: 12px; color: #555; overflow: hidden; }
.status svg { width: 10px; height: 10px; }
.status button, .status span { overflow: hidden; white-space: nowrap; }
.status .on { background: #d0d9f0; color: #1c2238; font-weight: bold; justify-self: start; padding: 0 4px; }
.layer { display: flex; align-items: center; gap: 5px; }
.layer i { width: 11px; height: 11px; background: #000; }
.callout { position: absolute; left: 0; top: 0; width: 210px; height: 260px; pointer-events: none; }
```
FILE: grid.js
```js
// Ground plane projection: s and t count ten-unit steps from the cube's left corner.
const depth = (s, t) => 1 - 0.0712 * s + 0.176 * t;
const project = (s, t) => {
  const w = depth(s, t);
  return `${((141 * s + 163.85 * t + 340.3) / w).toFixed(1)} ${((16.1 * s - 26.9 * t + 417.7) / w).toFixed(1)}`;
};
const MIN = -6.5, MAX = 7.5, NEAR = 0.3;
const parts = { minor: [], major: [] };
for (let i = 0; i <= 140; i++) {
  const k = MIN + i / 10;
  const name = i % 5 === 0 ? "major" : "minor";
  const tNear = Math.max(MIN, (NEAR - 1 + 0.0712 * k) / 0.176);
  const sNear = Math.min(MAX, (1 + 0.176 * k - NEAR) / 0.0712);
  parts[name].push(`M${project(k, tNear)}L${project(k, MAX)}`);
  if (sNear > MIN) parts[name].push(`M${project(MIN, k)}L${project(sNear, k)}`);
}
document.getElementById("minor").setAttribute("d", parts.minor.join(""));
document.getElementById("major").setAttribute("d", parts.major.join(""));
```
